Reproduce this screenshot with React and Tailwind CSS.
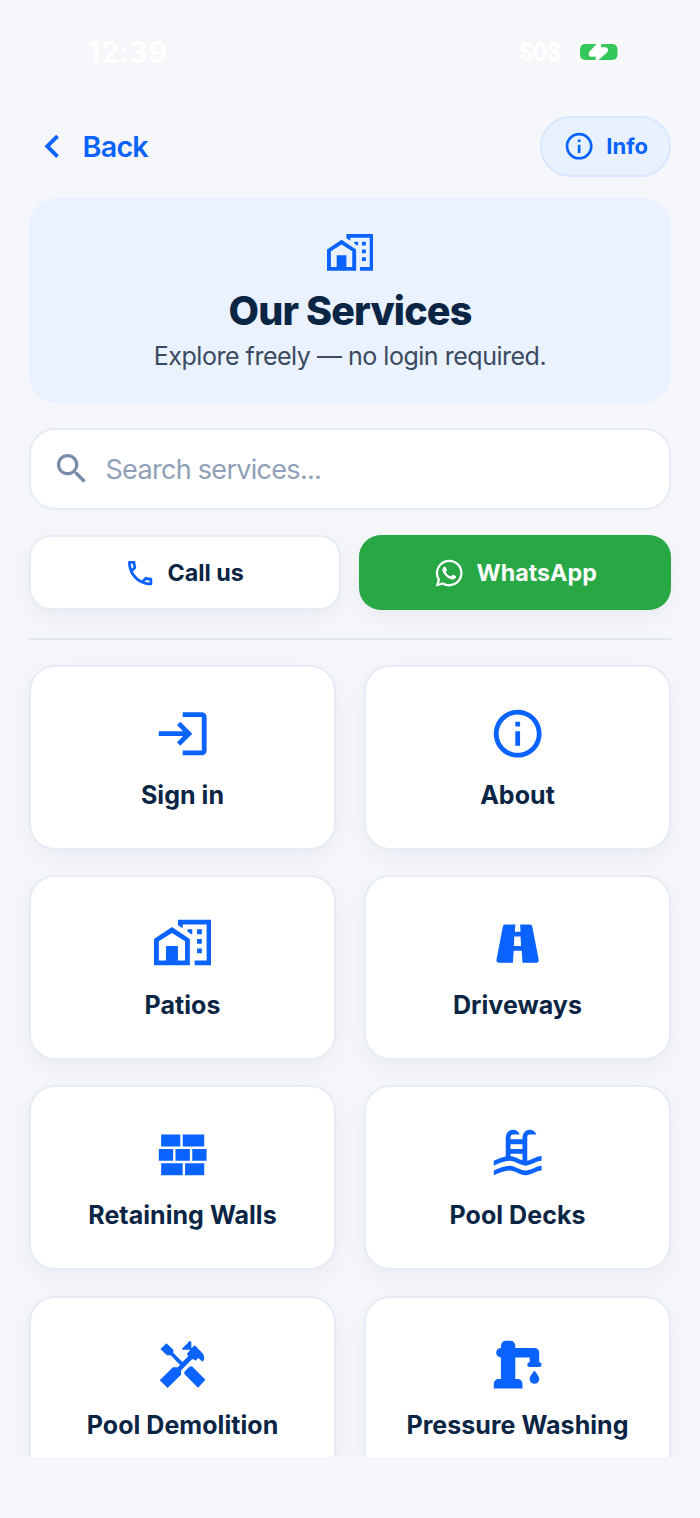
import React from "react";
import { MdLogin, MdInfoOutline, MdOutlineCall, MdChevronLeft, MdSearch } from "react-icons/md";

const paths = {
  home: "M10,2V4.26L12,5.59V4H22V19H17V21H24V2H10M7.5,5L0,10V21H15V10L7.5,5M14,6V6.93L15.61,8H16V6H14M18,6V8H20V6H18M7.5,7.5L13,11V19H10V13H5V19H2V11L7.5,7.5M18,10V12H20V10H18M18,14V16H20V14H18Z",
  road: "M18.1,4.8C18,4.3 17.6,4 17.1,4H13L13.2,7H10.8L11,4H6.8C6.3,4 5.9,4.4 5.8,4.8L3.1,18.8C3,19.4 3.5,20 4.1,20H10L10.3,15H13.7L14,20H19.8C20.4,20 20.9,19.4 20.8,18.8L18.1,4.8M10.4,13L10.6,9H13.2L13.4,13H10.4Z",
  wall: "M3,16H12V21H3V16M2,10H8V15H2V10M9,10H15V15H9V10M16,10H22V15H16V10M13,16H21V21H13V16M3,4H11V9H3V4M12,4H21V9H12V4Z",
  pool: "M2,15C3.67,14.25 5.33,13.5 7,13.17V5A3,3 0 0,1 10,2C11.31,2 12.42,2.83 12.83,4H10A1,1 0 0,0 9,5V6H14V5A3,3 0 0,1 17,2C18.31,2 19.42,2.83 19.83,4H17A1,1 0 0,0 16,5V14.94C18,14.62 20,13 22,13V15C19.78,15 17.56,17 15.33,17C13.11,17 10.89,15 8.67,15C6.44,15 4.22,16 2,17V15M14,8H9V10H14V8M14,12H9V13C10.67,13.16 12.33,14.31 14,14.79V12M2,19C4.22,18 6.44,17 8.67,17C10.89,17 13.11,19 15.33,19C17.56,19 19.78,17 22,17V19C19.78,19 17.56,21 15.33,21C13.11,21 10.89,19 8.67,19C6.44,19 4.22,20 2,21V19Z",
  tools: "M2.7 5.4L5.2 3L8.1 5.8V7.1L11.9 10.9L14.3 8.5L13.8 7.3L15 6.1V5.7H11.8V5.2L14.9 2.1L15.6 2.4V5.1L17 3.9L19.8 6.7C21.2 8.1 21.4 9.5 20.3 10.8L18.5 9.2L17.3 10.4L16.4 9.6L15.8 9.8L11.3 14.4V16.2L5.7 21.7L2.4 18.5L7.9 13.1H9.9L10.9 12.1L7 8.1H5.4L2.7 5.4M14.9 12.8H16L21.5 18.3L18.4 21.6L12.7 15.9V14.9L14.9 12.8Z",
  pump: "M19,14.5C19,14.5 21,16.67 21,18A2,2 0 0,1 19,20A2,2 0 0,1 17,18C17,16.67 19,14.5 19,14.5M5,18V9A2,2 0 0,1 3,7A2,2 0 0,1 5,5V4A2,2 0 0,1 7,2H9A2,2 0 0,1 11,4V5H19A2,2 0 0,1 21,7V9L21,11A1,1 0 0,1 22,12A1,1 0 0,1 21,13H17A1,1 0 0,1 16,12A1,1 0 0,1 17,11V9H11V18H12A2,2 0 0,1 14,20V22H2V20A2,2 0 0,1 4,18H5Z",
  whatsapp: "M12.04 2C6.58 2 2.13 6.45 2.13 11.91C2.13 13.66 2.59 15.36 3.45 16.86L2.05 22L7.3 20.62C8.75 21.41 10.38 21.83 12.04 21.83C17.5 21.83 21.95 17.38 21.95 11.92C21.95 9.27 20.92 6.78 19.05 4.91C17.18 3.03 14.69 2 12.04 2M12.05 3.67C14.25 3.67 16.31 4.53 17.87 6.09C19.42 7.65 20.28 9.72 20.28 11.92C20.28 16.46 16.58 20.15 12.04 20.15C10.56 20.15 9.11 19.76 7.85 19L7.55 18.83L4.43 19.65L5.26 16.61L5.06 16.29C4.24 15 3.8 13.47 3.8 11.91C3.81 7.37 7.5 3.67 12.05 3.67M8.53 7.33C8.37 7.33 8.1 7.39 7.87 7.64C7.65 7.89 7 8.5 7 9.71C7 10.93 7.89 12.1 8 12.27C8.14 12.44 9.76 14.94 12.25 16C12.84 16.27 13.3 16.42 13.66 16.53C14.25 16.72 14.79 16.69 15.22 16.63C15.7 16.56 16.68 16.03 16.89 15.45C17.1 14.87 17.1 14.38 17.04 14.27C16.97 14.17 16.81 14.11 16.56 14C16.31 13.86 15.09 13.26 14.87 13.18C14.64 13.1 14.5 13.06 14.31 13.3C14.15 13.55 13.67 14.11 13.53 14.27C13.38 14.44 13.24 14.46 13 14.34C12.74 14.21 11.94 13.95 11 13.11C10.26 12.45 9.77 11.64 9.62 11.39C9.5 11.15 9.61 11 9.73 10.89C9.84 10.78 10 10.6 10.1 10.45C10.23 10.31 10.27 10.2 10.35 10.04C10.43 9.87 10.39 9.73 10.33 9.61C10.27 9.5 9.77 8.26 9.56 7.77C9.36 7.29 9.16 7.26 9 7.33Z",
};

function Icon({ name, className }) {
  return (
    <svg viewBox="0 0 24 24" fill="currentColor" className={className}>
      <path d={paths[name]} />
    </svg>
  );
}

const tileIcon = "size-[57.4px] text-[#0a63ff]";

const tiles = [
  { label: "Sign in", icon: <MdLogin className={tileIcon} /> },
  { label: "About", icon: <MdInfoOutline className={tileIcon} /> },
  { label: "Patios", icon: <Icon name="home" className={tileIcon} /> },
  { label: "Driveways", icon: <Icon name="road" className={tileIcon} /> },
  { label: "Retaining Walls", icon: <Icon name="wall" className={tileIcon} /> },
  { label: "Pool Decks", icon: <Icon name="pool" className={tileIcon} /> },
  { label: "Pool Demolition", icon: <Icon name="tools" className={tileIcon} /> },
  { label: "Pressure Washing", icon: <Icon name="pump" className={tileIcon} /> },
];

function StatusBar() {
  return (
    <div className="flex h-[116px] shrink-0 items-start justify-between pt-[34px] pr-[79px] pl-[88px] text-white">
      <span className="text-[30px] leading-9 font-semibold tracking-[-0.1px]">12:39</span>
      <div className="flex h-9 items-center gap-[16px]">
        <span className="origin-right scale-x-[0.82] font-['Roboto'] text-[26px] leading-9 font-extrabold tracking-[-0.5px]">SOS</span>
        <svg viewBox="0 0 45 26" className="h-[26px] w-[45px]">
          <rect x="1" y="2" width="41" height="22" rx="7" fill="#fafbfd" />
          <rect x="4" y="5" width="37.5" height="16" rx="5" fill="#34c759" />
          <path d="M24 1.5L13.5 12.5C12 14.5 12.5 17.8 15.5 17.8H20L18.5 24.5L31 13.5C33 11.5 32 8.2 29.5 8.2H24.8L26 1.5Z" fill="#fff" />
          <path d="M43 10Q45 13 43 16Z" fill="#fff" />
        </svg>
      </div>
    </div>
  );
}

export default function App() {
  return (
    <div className="h-[1518px] w-[700px] overflow-hidden bg-[#f5f7fb] font-['Inter',sans-serif] text-[#0b2545]">
      <div className="flex h-[1457px] flex-col overflow-hidden">
        <StatusBar />
        <header className="flex h-[61px] shrink-0 items-center justify-between pr-[29px] pl-[28.5px] text-[#0a63ff]">
          <button className="flex items-center gap-[7.5px]">
            <MdChevronLeft className="size-[46.6px]" />
            <span className="text-[28.7px] leading-9 font-semibold tracking-[-0.8px]">Back</span>
          </button>
          <button className="flex h-[61px] w-[131px] items-center justify-center gap-[11px] rounded-full border-2 border-[#d8e6ff] bg-[#e8f2ff]">
            <MdInfoOutline className="size-[32.3px]" />
            <span className="text-[22px] font-[650] tracking-[0px]">Info</span>
          </button>
        </header>

        <section className="mx-[29px] mt-[21px] flex h-[205px] shrink-0 flex-col items-center rounded-[28px] bg-[#eaf2ff] pt-[32px]">
          <Icon name="home" className="size-[46.6px] text-[#0a63ff]" />
          <h1 className="mt-[10px] text-[39.5px] leading-[48px] font-extrabold tracking-[-0.85px]">Our Services</h1>
          <p className="mt-[4px] text-[25px] leading-[34px] tracking-[-0.48px] text-[#3a4a60]">Explore freely — no login required.</p>
        </section>

        <div className="mx-[29px] mt-[25px] flex h-[82px] shrink-0 items-center gap-[14px] rounded-[26px] border-2 border-[#e6ecf3] bg-white pl-[21px]">
          <MdSearch className="size-[39.5px] text-[#7a8ca8]" />
          <span className="pt-[2px] text-[27px] tracking-[-0.7px] text-[#8fa0b8]">Search services...</span>
        </div>

        <div className="mx-[29px] mt-[25px] grid h-[75px] shrink-0 grid-cols-2 gap-[18px] text-[23.3px] font-[650] tracking-[0px]">
          <button className="flex items-center justify-center gap-[11px] rounded-[22px] border-2 border-[#e6ecf3] bg-white pt-[2px] pr-[2px] shadow-[0_7px_22px_rgba(11,20,50,0.05)]">
            <MdOutlineCall className="size-[32.3px] text-[#0a63ff]" />
            Call us
          </button>
          <button className="flex items-center justify-center gap-[11px] rounded-[22px] bg-[#28a745] pt-[2px] text-white shadow-[0_7px_22px_rgba(11,20,50,0.05)]">
            <Icon name="whatsapp" className="size-[32.3px]" />
            WhatsApp
          </button>
        </div>

        <div className="mx-[29px] mt-[28px] h-[2px] shrink-0 bg-[#e2e8f0]" />

        <main className="mx-[29px] mt-[25px] grid shrink-0 auto-rows-[185px] grid-cols-2 gap-x-[28px] gap-y-[25.2px]">
          {tiles.map((t) => (
            <button
              key={t.label}
              className="flex flex-col items-center rounded-[26px] border-2 border-[#e6ecf3] bg-white pt-[38px] shadow-[0_7px_22px_rgba(11,20,50,0.05)]"
            >
              {t.icon}
              <span className="mt-[16.5px] text-[25px] leading-[32px] font-[650] tracking-[0.05px] whitespace-nowrap">{t.label}</span>
            </button>
          ))}
        </main>
      </div>
    </div>
  );
}
